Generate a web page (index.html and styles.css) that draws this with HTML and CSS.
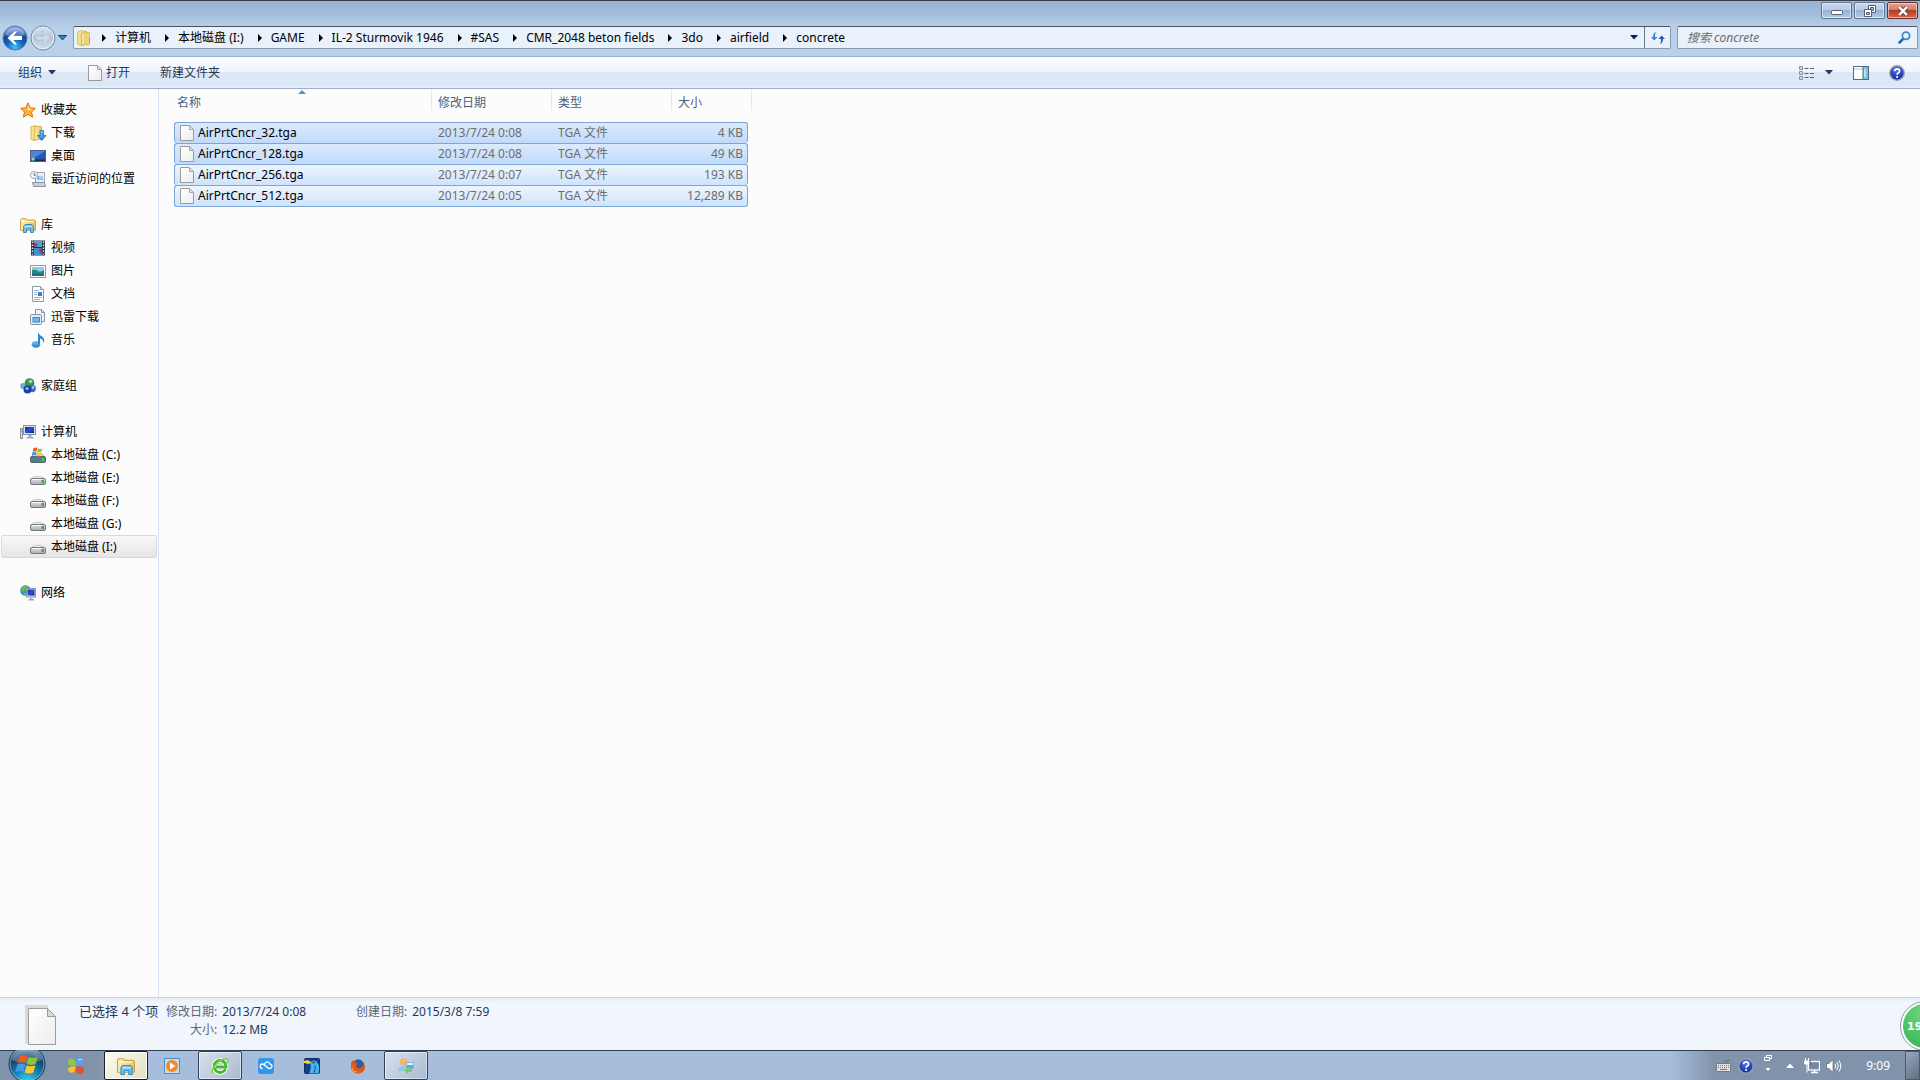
FILE: index.html
```html
<!DOCTYPE html>
<html lang="zh-CN">
<head>
    <meta charset="UTF-8">
    <meta name="viewport" content="width=device-width, initial-scale=1.0">
    <title>concrete</title>
    <link rel="stylesheet" href="styles.css">
</head>
<body>
    <!-- shared icons -->
    <svg class="defs" aria-hidden="true">
        <defs>
            <linearGradient id="paperFill" x1="0" y1="0" x2="1" y2="1">
                <stop offset="0" stop-color="#ffffff"/>
                <stop offset="1" stop-color="#ededed"/>
            </linearGradient>
            <linearGradient id="folderFill" x1="0" y1="0" x2="1" y2="0">
                <stop offset="0" stop-color="#fbf0b4"/>
                <stop offset="1" stop-color="#e6c65e"/>
            </linearGradient>
            <linearGradient id="blueFill" x1="0" y1="0" x2="0" y2="1">
                <stop offset="0" stop-color="#7cc6f2"/>
                <stop offset="1" stop-color="#1f7fd0"/>
            </linearGradient>
            <linearGradient id="driveFill" x1="0" y1="0" x2="0" y2="1">
                <stop offset="0" stop-color="#e3e3e7"/>
                <stop offset="1" stop-color="#a9a9b3"/>
            </linearGradient>
            <linearGradient id="screenFill" x1="0" y1="0" x2="1" y2="1">
                <stop offset="0" stop-color="#0b1fa8"/>
                <stop offset="0.5" stop-color="#2a50e0"/>
                <stop offset="1" stop-color="#0a1890"/>
            </linearGradient>
            <radialGradient id="backFill" cx="0.5" cy="0.9" r="0.8">
                <stop offset="0" stop-color="#3fc8ff"/>
                <stop offset="0.45" stop-color="#0f62c0"/>
                <stop offset="0.75" stop-color="#15469c"/>
                <stop offset="1" stop-color="#7ea6dc"/>
            </radialGradient>
            <linearGradient id="forwardFill" x1="0" y1="0" x2="0" y2="1">
                <stop offset="0" stop-color="#dbe5f1"/>
                <stop offset="0.5" stop-color="#b4c7de"/>
                <stop offset="1" stop-color="#d3e0ee"/>
            </linearGradient>
            <radialGradient id="orbFill" cx="0.5" cy="1" r="0.95">
                <stop offset="0" stop-color="#3fd6f5"/>
                <stop offset="0.4" stop-color="#1583b4"/>
                <stop offset="0.75" stop-color="#17426c"/>
                <stop offset="1" stop-color="#6f93b4"/>
            </radialGradient>
            <radialGradient id="helpFill" cx="0.5" cy="0.3" r="0.7">
                <stop offset="0" stop-color="#4d7df0"/>
                <stop offset="1" stop-color="#0b209a"/>
            </radialGradient>
        </defs>
        <symbol id="icon-file" viewBox="0 0 14 16">
            <path d="M0.500 0.500h9l4 4v11h-13z" fill="url(#paperFill)" stroke="#9a9a9a"/>
            <path d="M9.500 0.500v4h4z" fill="#e4e4e4" stroke="#a8a8a8"/>
        </symbol>
        <symbol id="icon-drive" viewBox="0 0 16 16">
            <path d="M1 9l3-2q4-1.500 8 0l3 2z" fill="#f4f4f6" stroke="#b5b5bb" stroke-width="0.800"/>
            <rect x="0.500" y="8.500" width="15" height="6" rx="1.500" fill="url(#driveFill)" stroke="#77777f"/>
            <path d="M2 9.500h9" stroke="#fafafa"/>
            <rect x="11.500" y="10" width="2.500" height="3" fill="#35b520"/>
        </symbol>
        <symbol id="icon-library" viewBox="0 0 16 16">
            <path d="M0.500 13.500v-11l1-1h4l1 1.500h8l1 1v9.500z" fill="url(#folderFill)" stroke="#c9a548"/>
            <path d="M2 4.500h12" stroke="#fffbe0"/>
            <path d="M3.500 15.500v-6l1.500-2h7l1.500 2v6h-3v-3.500h-4v3.500z" fill="#6fc0ea" stroke="#3c8fc4"/>
            <path d="M4.500 9.500h8" stroke="#c8ecfc"/>
        </symbol>
        <symbol id="icon-flag" viewBox="0 0 20 20">
            <path d="M3.500 3.500q3.500-2 6.500 0L8.500 9q-3-1.500-6.500 0z" fill="#ee5a24"/>
            <path d="M11 4q3.500 1.600 7 0L16.500 9.500q-3.500 1.600-7 0z" fill="#8cc63c"/>
            <path d="M1.800 10q3.200-1.600 6.500 0L6.800 16Q3.500 14.400 0.300 16z" fill="#3f9be8"/>
            <path d="M9.300 10.500q3.500 1.600 7 0L14.700 16.300q-3.500 1.700-7 0z" fill="#fcc62e"/>
        </symbol>
        <symbol id="icon-help" viewBox="0 0 16 16">
            <circle cx="8" cy="8" r="7.200" fill="url(#helpFill)" stroke="#9a9cae" stroke-width="1.500"/>
            <path d="M5.500 6.300Q5.700 3.800 8.100 3.800T10.600 6Q10.600 7.300 9.200 8 8.100 8.600 8.100 9.800" fill="none" stroke="#fff" stroke-width="1.700"/>
            <circle cx="8.100" cy="12" r="1.100" fill="#fff"/>
        </symbol>
    </svg>

    <header class="window-head">
        <div class="titlebar">
            <button class="win-btn" aria-label="最小化">
                <svg width="14" height="14" viewBox="0 0 14 14"><rect x="1.500" y="6.500" width="11" height="4" rx="1" fill="#fff" stroke="#53627a"/></svg>
            </button>
            <button class="win-btn" aria-label="向下还原">
                <svg width="14" height="14" viewBox="0 0 14 14"><path d="M5.500 1.500h7v7h-7z" fill="#fff" stroke="#53627a"/><path d="M7.500 3.500h3v3h-3z" fill="#9fb7d5" stroke="#53627a"/><path d="M1.500 5.500h7v7h-7z" fill="#fff" stroke="#53627a"/><path d="M3.500 8.500h3v2h-3z" fill="#9fb7d5" stroke="#53627a"/></svg>
            </button>
            <button class="win-btn close" aria-label="关闭">
                <svg width="14" height="14" viewBox="0 0 14 14"><path d="M3.500 3.500l7 7M10.500 3.500l-7 7" stroke="#5b3a45" stroke-width="4.500"/><path d="M3.200 3.200l7.600 7.600M10.800 3.200l-7.600 7.600" stroke="#fff" stroke-width="2.500"/></svg>
            </button>
        </div>
        <div class="navbar">
            <div class="history">
                <button class="round" aria-label="后退">
                    <svg width="26" height="26" viewBox="0 0 26 26">
                        <circle cx="13" cy="13" r="12" fill="url(#backFill)" stroke="#5f7596"/>
                        <path d="M3.500 10a10 10 0 0 1 19 0q-9.500 4-19 0z" fill="#fff" opacity="0.300"/>
                        <path d="M5.500 13L12.500 6.500H15L11.500 11H20v4H11.500L15 19.500H12.500z" fill="#fff"/>
                    </svg>
                </button>
                <button class="round" aria-label="前进">
                    <svg width="26" height="26" viewBox="0 0 26 26">
                        <circle cx="13" cy="13" r="12" fill="url(#forwardFill)" stroke="#76889f"/>
                        <circle cx="13" cy="13" r="10.800" fill="none" stroke="#e8eff8"/>
                        <path d="M20.500 13L13.500 6.500H11L14.500 11H6v4H14.500L11 19.500H13.500z" fill="#cfdbea" stroke="#a9bbd2" stroke-width="0.600"/>
                    </svg>
                </button>
                <button class="recent" aria-label="最近的页面">
                    <svg width="9" height="6" viewBox="0 0 9 6"><path d="M0.500 0.500h8l-4 4.500z" fill="#2f86c6" stroke="#17416e"/></svg>
                </button>
            </div>
            <nav class="address" aria-label="地址">
                <svg class="address-icon" width="14" height="16" viewBox="0 0 14 16">
                    <path d="M0.500 2l4-1.500 3 1V15l-3 .5-4-1z" fill="#f4df8c" stroke="#dfc05a"/>
                    <path d="M4.500 3.500l5-2.500v12.500l-5 2z" fill="url(#folderFill)" stroke="#d8b652"/>
                    <path d="M9.500 2.500h3v12l-4 .5" fill="#f0d67a" stroke="#dcbb58"/>
                    <path d="M12.500 8v5" stroke="#69aadb"/>
                </svg>
                <ol class="crumbs">
                    <li><a href="#">计算机</a></li>
                    <li><a href="#">本地磁盘 (I:)</a></li>
                    <li><a href="#">GAME</a></li>
                    <li><a href="#">IL-2 Sturmovik 1946</a></li>
                    <li><a href="#">#SAS</a></li>
                    <li><a href="#">CMR_2048 beton fields</a></li>
                    <li><a href="#">3do</a></li>
                    <li><a href="#">airfield</a></li>
                    <li><a href="#">concrete</a></li>
                </ol>
                <button class="addr-btn" aria-label="以前的位置">
                    <svg width="8" height="5" viewBox="0 0 8 5"><path d="M0 0h8L4 4.500z" fill="#0a1a66"/></svg>
                </button>
                <button class="addr-btn refresh" aria-label="刷新">
                    <svg width="14" height="14" viewBox="0 0 14 14">
                        <path d="M5.500 1Q4 1.500 4 4v2H6.500L3.200 9.500 0 6H2Q2 1.500 5.500 1z" fill="#2e86d4"/>
                        <path d="M8.500 13Q10 12.500 10 10V8H7.500l3.200-3.500L14 8H12Q12 12.500 8.500 13z" fill="#2459b4"/>
                    </svg>
                </button>
            </nav>
            <form class="search">
                <input type="search" aria-label="搜索" placeholder="搜索 concrete">
                <button type="submit" aria-label="搜索">
                    <svg width="13" height="13" viewBox="0 0 13 13"><path d="M1.500 11.500L6 7" stroke="#2866a8" stroke-width="2.500" stroke-linecap="round"/><circle cx="8" cy="4.800" r="3.600" fill="#eef7fd" stroke="#3a8ccc" stroke-width="1.800"/></svg>
                </button>
            </form>
        </div>
    </header>

    <div class="toolbar">
        <button class="organize">组织
            <svg width="8" height="5" viewBox="0 0 8 5"><path d="M0 0h8L4 4.500z" fill="#1e395b"/></svg>
        </button>
        <button class="open"><svg width="14" height="16"><use href="#icon-file"/></svg>打开</button>
        <button>新建文件夹</button>
        <div class="toolbar-right">
            <button class="view" aria-label="更改您的视图">
                <svg width="16" height="14" viewBox="0 0 16 14">
                    <path d="M0.500 0.500h3v3h-3zM0.500 5.500h3v3h-3zM0.500 10.500h3v3h-3z" fill="#fff" stroke="#8194ad"/>
                    <path d="M1.500 2h1M1.500 12h1" stroke="#3d8a5e"/>
                    <path d="M1.500 7h1" stroke="#c33"/>
                    <path d="M5.500 2.500h4M11 2.500h4M5.500 7.500h4M11 7.500h4M5.500 11.500h4M11 11.500h4" stroke="#51647e"/>
                </svg>
                <svg width="8" height="5" viewBox="0 0 8 5"><path d="M0 0h8L4 4.500z" fill="#1e395b"/></svg>
            </button>
            <button aria-label="显示预览窗格">
                <svg width="16" height="14" viewBox="0 0 16 14"><rect x="0.500" y="0.500" width="15" height="13" fill="#fff" stroke="#54687f"/><path d="M1 3h9" stroke="#b3c4d8"/><path d="M10 1h5v12h-5z" fill="#74c3dc"/><path d="M10 1v12" stroke="#54687f"/><path d="M12 3v8" stroke="#b6e6f2" stroke-width="2"/></svg>
            </button>
            <button aria-label="获取帮助">
                <svg width="16" height="16"><use href="#icon-help"/></svg>
            </button>
        </div>
    </div>

    <div class="content">
        <nav class="sidebar" aria-label="导航窗格">
            <section>
                <a class="root" href="#">
                    <svg width="16" height="16" viewBox="0 0 16 16"><path d="M8 .8l2.200 5 5.300.5-4 3.600 1.200 5.300L8 12.400l-4.700 2.800 1.200-5.300-4-3.600 5.300-.5z" fill="#fbb03a" stroke="#e0741c"/><path d="M8 3l1.500 3.800 3 .3L8 8.500z" fill="#fff0a8"/></svg>
                    收藏夹</a>
                <a href="#">
                    <svg width="16" height="16" viewBox="0 0 16 16"><path d="M1 1.500l5-1 1 1v13l-3 1-3-1z" fill="#f6e494" stroke="#d9b950"/><path d="M5 1.500h6.500v13H4z" fill="url(#folderFill)" stroke="#d9b950"/><path d="M10 5.500h3.500v5H16l-4.300 5-4.200-5H10z" fill="url(#blueFill)" stroke="#1c68b0" stroke-width="0.800"/></svg>
                    下载</a>
                <a href="#">
                    <svg width="16" height="16" viewBox="0 0 16 16"><rect x="0.500" y="2.500" width="15" height="11" fill="#2457b8" stroke="#4b5f88"/><path d="M1 3h14L6 9 1 10z" fill="#4b86dc"/><path d="M1 11.500h14v1.500H1z" fill="#1c2c58"/><circle cx="3" cy="11" r="2" fill="#40b4c8"/><circle cx="3" cy="11" r="0.900" fill="#f4d24a"/></svg>
                    桌面</a>
                <a href="#">
                    <svg width="16" height="16" viewBox="0 0 16 16"><path d="M5.500 1.500h9v10h-9z" fill="#e9eef4" stroke="#9aa4b0"/><path d="M2.500 11.500h12l1 4h-12z" fill="#c9cfd8" stroke="#8d96a2"/><path d="M7.500 5h5v4h-5z" fill="#5fa9e2"/><path d="M9 6h3M9 8h2" stroke="#fff"/><circle cx="4" cy="4" r="3.500" fill="#f7f9fb" stroke="#9aa4b0"/><path d="M4 2v2.200h2" fill="none" stroke="#5d6b7d"/></svg>
                    最近访问的位置</a>
            </section>
            <section>
                <a class="root" href="#"><svg width="16" height="16"><use href="#icon-library"/></svg>库</a>
                <a href="#">
                    <svg width="16" height="16" viewBox="0 0 16 16"><rect x="1" y="0.500" width="14" height="15" fill="#28323c"/><path d="M4 1h8v6H4z" fill="#4aa3dc"/><path d="M4 8h8v7H4z" fill="#3c8fd0"/><path d="M4 3l4 1-2 3H4zM9 9l3-1v4l-2 2z" fill="#9c3e56"/><path d="M2.500 1.500v13M13.500 1.500v13" stroke="#e4eaee" stroke-width="1.500" stroke-dasharray="1.500 1.500"/></svg>
                    视频</a>
                <a href="#">
                    <svg width="16" height="16" viewBox="0 0 16 16"><rect x="0.500" y="2.500" width="15" height="12" fill="#fff" stroke="#8d99a6"/><path d="M2 4h12v9H2z" fill="#8ccdf0"/><path d="M2 7q4-1 6 1t6-1v6H2z" fill="#2f8a6c"/><path d="M2 10q6 1 12 .5V13H2z" fill="#2468a8"/></svg>
                    图片</a>
                <a href="#">
                    <svg width="16" height="16" viewBox="0 0 16 16"><path d="M2.500 0.500h8l3 3v12h-11z" fill="#fff" stroke="#8d99a6"/><path d="M10.500 0.500v3h3" fill="#dfe5ec" stroke="#8d99a6"/><path d="M4 4.500h5M4 6.500h3M4 8.500h3M4 11.500h8M4 13.500h6" stroke="#93b4d8"/><path d="M8 6h4v4H8z" fill="#3a7fd0"/></svg>
                    文档</a>
                <a href="#">
                    <svg width="16" height="16" viewBox="0 0 16 16"><path d="M5.500 0.500h6l3 3v9h-9z" fill="#f0f5fa" stroke="#8297ad"/><path d="M11.500 0.500v3h3" fill="none" stroke="#8297ad"/><rect x="0.500" y="5.500" width="11" height="10" rx="1" fill="#e2edf7" stroke="#7b94b0"/><rect x="3" y="8.500" width="6.500" height="4.500" fill="#73b8ec" stroke="#3f86c4"/></svg>
                    迅雷下载</a>
                <a href="#">
                    <svg width="16" height="16" viewBox="0 0 16 16"><ellipse cx="6" cy="12.300" rx="4.300" ry="3.400" fill="url(#blueFill)"/><path d="M8 0q1 3 4 4.500 3.800 2.500 1.300 7 .5-4.500-3.300-5v6H8z" fill="#2386d6"/></svg>
                    音乐</a>
            </section>
            <section>
                <a class="root" href="#">
                    <svg width="16" height="16" viewBox="0 0 16 16"><circle cx="3.200" cy="8" r="3" fill="#6aa8dc"/><circle cx="9.500" cy="5" r="4.800" fill="#35974a"/><circle cx="12.200" cy="10.500" r="3.700" fill="#3f66bc"/><circle cx="7.500" cy="11.500" r="4" fill="#1e3f9c"/><circle cx="10.500" cy="3.500" r="1.800" fill="#a5dd98"/><circle cx="7" cy="10.500" r="1.600" fill="#8fb8f0"/><circle cx="13" cy="9.500" r="1.400" fill="#9fc4ee"/></svg>
                    家庭组</a>
            </section>
            <section>
                <a class="root" href="#">
                    <svg width="16" height="16" viewBox="0 0 16 16"><rect x="0.500" y="4.500" width="2" height="10" fill="#d7dbe0" stroke="#8c949e"/><path d="M1 7h1" stroke="#3ca83c"/><rect x="3.500" y="1.500" width="12" height="9" fill="#dde1e6" stroke="#8c949e"/><path d="M5 3h9v6H5z" fill="url(#screenFill)"/><path d="M8.500 11h3v2h2v1.500h-7V13h2z" fill="#a4abb5"/></svg>
                    计算机</a>
                <a href="#">
                    <svg width="16" height="16" viewBox="0 0 16 16"><path d="M1 10l3-3h8l3 3z" fill="#dfe3e8" stroke="#a0a6ad"/><rect x="0.500" y="9.500" width="15" height="6" rx="1" fill="#4b7f92" stroke="#5c6670"/><rect x="12" y="11" width="2" height="3" fill="#4bd02c"/><use href="#icon-flag" x="1" y="-1" width="13" height="12"/></svg>
                    本地磁盘 (C:)</a>
                <a href="#"><svg width="16" height="16"><use href="#icon-drive"/></svg>本地磁盘 (E:)</a>
                <a href="#"><svg width="16" height="16"><use href="#icon-drive"/></svg>本地磁盘 (F:)</a>
                <a href="#"><svg width="16" height="16"><use href="#icon-drive"/></svg>本地磁盘 (G:)</a>
                <a class="current" href="#"><svg width="16" height="16"><use href="#icon-drive"/></svg>本地磁盘 (I:)</a>
            </section>
            <section>
                <a class="root" href="#">
                    <svg width="16" height="16" viewBox="0 0 16 16"><circle cx="5.500" cy="5.500" r="5.300" fill="#2c8fd6"/><path d="M1.500 3q3-3.500 6.500-2L6 4.500 3.500 7 1 6zM3 8l3 0v3l-2-1z" fill="#5cc04a"/><rect x="6.500" y="3.500" width="9" height="8.500" fill="#dde1e6" stroke="#8c949e"/><path d="M7.500 4.500h7v6h-7z" fill="url(#screenFill)"/><path d="M10 12.500h2.500V14H14v1.500H8.500V14H10z" fill="#a4abb5"/></svg>
                    网络</a>
            </section>
        </nav>

        <main class="files">
            <table>
                <colgroup>
                    <col class="col-name">
                    <col class="col-date">
                    <col class="col-type">
                    <col class="col-size">
                    <col class="col-edge">
                </colgroup>
                <thead>
                    <tr>
                        <th class="sorted" aria-sort="ascending">名称</th>
                        <th>修改日期</th>
                        <th>类型</th>
                        <th colspan="2">大小</th>
                    </tr>
                </thead>
                <tbody>
                    <tr class="deep">
                        <td><svg width="14" height="16"><use href="#icon-file"/></svg>AirPrtCncr_32.tga</td>
                        <td>2013/7/24 0:08</td>
                        <td>TGA 文件</td>
                        <td class="size">4 KB</td>
                        <td class="edge"></td>
                    </tr>
                    <tr class="deep">
                        <td><svg width="14" height="16"><use href="#icon-file"/></svg>AirPrtCncr_128.tga</td>
                        <td>2013/7/24 0:08</td>
                        <td>TGA 文件</td>
                        <td class="size">49 KB</td>
                        <td class="edge"></td>
                    </tr>
                    <tr>
                        <td><svg width="14" height="16"><use href="#icon-file"/></svg>AirPrtCncr_256.tga</td>
                        <td>2013/7/24 0:07</td>
                        <td>TGA 文件</td>
                        <td class="size">193 KB</td>
                        <td class="edge"></td>
                    </tr>
                    <tr>
                        <td><svg width="14" height="16"><use href="#icon-file"/></svg>AirPrtCncr_512.tga</td>
                        <td>2013/7/24 0:05</td>
                        <td>TGA 文件</td>
                        <td class="size">12,289 KB</td>
                        <td class="edge"></td>
                    </tr>
                </tbody>
            </table>
        </main>
    </div>

    <footer class="details">
        <svg class="details-icon" width="32" height="41" viewBox="0 0 32 41">
            <path d="M0 0h23v4H4v35H0z" fill="#d9d9d9"/>
            <path d="M3.500 3.500h19l8 8v28h-27z" fill="url(#paperFill)" stroke="#9c9c9c"/>
            <path d="M22.500 3.500v8h8z" fill="#d8d8d8" stroke="#9c9c9c"/>
        </svg>
        <p class="details-title">已选择 4 个项</p>
        <dl>
            <dt>修改日期:</dt>
            <dd>2013/7/24 0:08</dd>
            <dt>创建日期:</dt>
            <dd>2015/3/8 7:59</dd>
            <dt>大小:</dt>
            <dd>12.2 MB</dd>
        </dl>
        <button class="float-ball" aria-label="加速球">19</button>
    </footer>

    <div class="taskbar">
        <button class="start" aria-label="开始">
            <svg width="38" height="38" viewBox="0 0 38 38">
                <circle cx="19" cy="19" r="18" fill="url(#orbFill)" stroke="#24405e"/>
                <circle cx="19" cy="19" r="16.800" fill="none" stroke="#bfe0f2" opacity="0.500"/>
                <path d="M4 15a15.500 15.500 0 0 1 30 0q-15 6-30 0z" fill="#fff" opacity="0.250"/>
                <use href="#icon-flag" x="6" y="7" width="27" height="25"/>
            </svg>
        </button>
        <div class="tasks">
            <button class="task pinned" aria-label="360">
                <svg width="18" height="18" viewBox="0 0 18 18"><path d="M1 5Q1 1 5 2q4 0 3.500 6-6 1.500-7-1z" fill="#94c93a"/><circle cx="12.800" cy="5" r="4.200" fill="#5b9fe6"/><path d="M1 12q2-3.500 7.500-2.500 0 6-3 6Q1 16.500 1 12z" fill="#f2c32c"/><circle cx="12.800" cy="13" r="4.200" fill="#e0503c"/><path d="M11 3q2-1.500 4 0" stroke="#d3e8fc" fill="none"/></svg>
            </button>
            <button class="task active" aria-label="Windows 资源管理器">
                <svg width="18" height="18"><use href="#icon-library"/></svg>
            </button>
            <button class="task" aria-label="Windows Media Player">
                <svg width="16" height="16" viewBox="0 0 16 16"><rect x="0.500" y="0.500" width="15" height="15" fill="#c2def2" stroke="#4b8fc4"/><circle cx="8" cy="8" r="6" fill="#f58a1e"/><path d="M6 4.500l5.500 3.500L6 11.500z" fill="#fff"/></svg>
            </button>
            <button class="task open" aria-label="浏览器">
                <svg width="18" height="18" viewBox="0 0 18 18"><path d="M14.500 12a6 6 0 1 1 .3-4.200q.4 1.500.2 2.200H5" fill="none" stroke="#fff" stroke-width="4.500"/><path d="M14.500 12a6 6 0 1 1 .3-4.200q.4 1.500.2 2.200H5" fill="none" stroke="#43b82a" stroke-width="2.800"/><path d="M1.500 16Q0 12 6 6.500t10.500-4.500Q18 4 15 7" fill="none" stroke="#7fd44e" stroke-width="1.500"/></svg>
            </button>
            <button class="task" aria-label="云盘">
                <svg width="16" height="16" viewBox="0 0 16 16"><rect width="16" height="16" rx="3" fill="#2f98ee"/><path d="M4.500 10.500a2.200 2.200 0 0 1 0-4.500Q6 6 8 8.200t3.500 2.300a2.200 2.200 0 0 0 .5-4.400Q11 3.500 8.500 4 7 4.500 6.500 6" fill="none" stroke="#fff" stroke-width="1.300"/></svg>
            </button>
            <button class="task" aria-label="迅雷">
                <svg width="16" height="16" viewBox="0 0 16 16"><rect x="0.500" y="0.500" width="15" height="15" rx="1" fill="#12408c" stroke="#0e2c64"/><path d="M5 15.500Q8 10 6 5q3-4.500 7-1 3.500 4 1.500 11.500z" fill="#4cb0ee"/><path d="M0 3q4-2 7 1L5 6 0 5z" fill="#f6d52c"/><circle cx="9.500" cy="4.500" r="1" fill="#0e2c64"/><path d="M10 14.500q2-4 1-7" stroke="#17498f" fill="none"/></svg>
            </button>
            <button class="task" aria-label="Firefox">
                <svg width="16" height="16" viewBox="0 0 16 16"><circle cx="8" cy="8.500" r="7" fill="#e8671c"/><circle cx="8.500" cy="6.500" r="5" fill="#2b5d9c"/><path d="M1 5l2-3 1 2q3 0 4 2-2 0-2 2 1 3 4 2 4-1 3-5 3 3 1.500 6.500Q12 15.500 8 15.500 1 15 1 8z" fill="#e2571a"/><path d="M2 7q0 6 6 7-4 1-6-3z" fill="#f9b53a"/></svg>
            </button>
            <button class="task open" aria-label="图片工具">
                <svg width="18" height="18" viewBox="0 0 18 18"><circle cx="6.500" cy="5" r="3.800" fill="#f2b76c"/><path d="M1 14q0-5 5.500-5t5.500 5z" fill="#8cc8f0"/><path d="M9.500 5.500h7v6h-7z" fill="#eaf4fb" stroke="#7fb3da"/><path d="M10 8h6v3h-6z" fill="#4cb8c4"/><path d="M7 13.500l4-3v1.500h4v3h-4V17z" fill="#7ed03c"/></svg>
            </button>
        </div>
        <div class="tray">
            <button aria-label="输入法">
                <svg width="16" height="14" viewBox="0 0 16 14"><path d="M8 4Q8 2 11 2t2-2" fill="none" stroke="#6d6d6d"/><rect x="0.500" y="4.500" width="14" height="8" rx="1" fill="#e2e2e4" stroke="#77797d"/><path d="M2 6.500h11M2 8.500h11" stroke="#77797d" stroke-dasharray="1 1"/><path d="M4 10.500h7" stroke="#77797d"/></svg>
            </button>
            <button aria-label="帮助">
                <svg width="16" height="16"><use href="#icon-help"/></svg>
            </button>
            <button class="lang" aria-label="语言栏">
                <svg width="8" height="18" viewBox="0 0 8 18"><path d="M2.500 1.500h5v3h-5z" fill="none" stroke="#fff"/><path d="M0.500 3.500h5v3h-5z" fill="#8495ad" stroke="#fff"/><path d="M1.500 14h5l-2.500 3z" fill="#fff"/></svg>
            </button>
            <button class="more" aria-label="显示隐藏的图标">
                <svg width="8" height="5" viewBox="0 0 8 5"><path d="M0 5h8L4 .5z" fill="#fff"/></svg>
            </button>
            <button aria-label="网络">
                <svg width="16" height="16" viewBox="0 0 16 16"><rect x="4.500" y="3.500" width="11" height="8.500" fill="#7688a2" stroke="#fff" stroke-width="1.300"/><path d="M7 14.500h7M10.500 12v2.500" stroke="#fff" stroke-width="1.500"/><path d="M1.500 0v3M4.500 0v3" stroke="#fff"/><path d="M0.500 3h5v3h-5zM3 6v8.500" fill="#fff" stroke="#fff"/><path d="M6 7V2" stroke="#333f52" stroke-width="0.800"/></svg>
            </button>
            <button aria-label="音量">
                <svg width="16" height="16" viewBox="0 0 16 16"><path d="M0.500 5.500H3L7 1.500v13l-4-4H.5z" fill="#fff" stroke="#4b586c" stroke-width="0.600"/><path d="M9 5.500q1.500 2.500 0 5M11 4q2.500 4 0 8M13 2.500q3.500 5.500 0 11" fill="none" stroke="#fff"/></svg>
            </button>
            <time class="clock">9:09</time>
            <button class="show-desktop" aria-label="显示桌面"></button>
        </div>
    </div>
</body>
</html>
```
FILE: styles.css
```css
    * {
        box-sizing: border-box;
    }

    body {
        display: flex;
        flex-direction: column;
        height: 100vh;
        margin: 0;
        overflow: hidden;
        font: 12px/18px "Noto Sans", "Noto Sans CJK SC", sans-serif;
        color: #000;
        background-color: #fcfcfc;
    }

    button {
        display: flex;
        align-items: center;
        justify-content: center;
        margin: 0;
        padding: 0;
        border: none;
        background: none;
        font: inherit;
        color: inherit;
    }

    a {
        color: inherit;
        text-decoration: none;
    }

    svg {
        flex: none;
        display: block;
    }

    .defs {
        position: absolute;
        width: 0;
        height: 0;
    }

    /* title bar and address bar */
    .window-head {
        border-top: 1px solid #3a3f48;
        background: linear-gradient(#98b2d3, #a5bedc 14px, #bad0ea 26px, #b9d1ea);
    }

    .titlebar {
        display: flex;
        justify-content: flex-end;
        gap: 2px;
        height: 24px;
        padding: 1px 2px 0 0;
    }

    .win-btn {
        width: 31px;
        height: 17px;
        border: 1px solid #5f7593;
        border-radius: 2px;
        background: linear-gradient(#c8d8ec, #b6cae4 50%, #98b2d2 50%, #b4cae4);
        box-shadow: inset 0 0 0 1px rgba(255, 255, 255, 0.5);
    }

    .win-btn.close {
        border-color: #6b2b30;
        background: linear-gradient(#e0a494, #d07a66 50%, #bb3a22 50%, #d4684c);
    }

    .navbar {
        display: flex;
        align-items: center;
        gap: 6px;
        height: 25px;
        margin-bottom: 6px;
        padding: 0 2px;
    }

    .history {
        display: flex;
        align-items: center;
        gap: 2px;
    }

    .recent {
        width: 9px;
    }

    .address, .search {
        display: flex;
        align-items: center;
        height: 23px;
        border: 1px solid #8c99aa;
        border-top-color: #4b535e;
        border-radius: 2px;
        background-color: #e9f1fa;
    }

    .address {
        flex: 1;
        padding-left: 3px;
    }

    .crumbs {
        display: flex;
        flex: 1;
        gap: 3px;
        margin: 0;
        padding: 0;
        list-style: none;
    }

    .crumbs li {
        display: flex;
        align-items: center;
    }

    .crumbs li::before {
        content: "";
        margin: 0 9px 0 11px;
        border: 4px solid transparent;
        border-left-color: #000;
        border-right-width: 0;
    }

    .addr-btn {
        width: 20px;
        height: 21px;
    }

    .addr-btn.refresh {
        width: 26px;
        border-left: 1px solid #6c7887;
    }

    .search {
        width: 241px;
        padding: 0 6px 0 9px;
    }

    .search input {
        flex: 1;
        min-width: 0;
        height: 21px;
        padding: 0;
        border: none;
        outline: none;
        background: none;
        font: inherit;
        font-style: italic;
    }

    .search input::placeholder {
        color: #6d6d6d;
    }

    /* command bar */
    .toolbar {
        display: flex;
        align-items: center;
        gap: 30px;
        height: 33px;
        padding: 0 15px 0 18px;
        border-top: 1px solid #9db4d0;
        border-bottom: 1px solid #a0afc3;
        background: linear-gradient(#fafcff, #eff5fc 15px, #dce6f4 15px, #dde8f6 28px, #e6eff9);
        color: #1e395b;
    }

    .organize, .open {
        gap: 6px;
    }

    .open {
        margin-left: 2px;
        gap: 4px;
    }

    .toolbar-right {
        display: flex;
        align-items: center;
        gap: 20px;
        margin-left: auto;
    }

    .view {
        gap: 10px;
    }

    /* folder tree */
    .content {
        display: flex;
        flex: 1;
        min-height: 0;
    }

    .sidebar {
        display: flex;
        flex-direction: column;
        gap: 23px;
        width: 159px;
        padding: 9px 1px 0;
        border-right: 1px solid #d6e1f2;
    }

    .sidebar a {
        display: flex;
        align-items: center;
        gap: 5px;
        height: 23px;
        padding-left: 28px;
        border: 1px solid transparent;
        border-radius: 2px;
    }

    .sidebar a.root {
        padding-left: 18px;
    }

    .sidebar a.current {
        border-color: #d9d9d9;
        background: linear-gradient(#f8f8f8, #e6e6e6);
    }

    /* file list */
    .files {
        flex: 1;
        padding-left: 15px;
    }

    table {
        border-collapse: separate;
        border-spacing: 0;
        table-layout: fixed;
        width: 578px;
    }

    .col-name {
        width: 258px;
    }

    .col-date, .col-type {
        width: 120px;
    }

    .col-size {
        width: 76px;
    }

    .col-edge {
        width: 4px;
    }

    th {
        height: 33px;
        padding: 5px 6px 0;
        background: linear-gradient(#e8f0fa, #d5e2f1, #f4f8fc) right top / 1px 24px no-repeat;
        color: #4c607a;
        font-weight: normal;
        text-align: left;
        vertical-align: top;
    }

    /* sort arrow above the column title */
    .sorted {
        position: relative;
        padding-left: 3px;
    }

    .sorted::after {
        content: "";
        position: absolute;
        top: 1px;
        left: 50%;
        margin-left: -5px;
        border: 4px solid transparent;
        border-top-width: 0;
        border-bottom-color: #5c93b5;
    }

    td {
        height: 21px;
        padding: 0 6px;
        border-top: 1px solid #7da5d8;
        background: linear-gradient(#edf5fe, #cfe3fc);
        color: #6d6d6d;
        line-height: 20px;
        white-space: nowrap;
    }

    .deep td {
        background: linear-gradient(#dceafc, #c0dafb);
    }

    tbody tr:last-child td {
        border-bottom: 1px solid #7da5d8;
    }

    td:first-child {
        display: flex;
        align-items: center;
        gap: 4px;
        padding-left: 5px;
        border-left: 1px solid #7da5d8;
        border-radius: 3px 0 0 3px;
        color: #000;
    }

    tbody tr:last-child td:first-child {
        height: 22px;
    }

    td.size {
        padding-right: 4px;
        border-right: 1px solid #7da5d8;
        border-radius: 0 3px 3px 0;
        text-align: right;
    }

    tbody tr td.edge {
        padding: 0;
        border: none;
        background: none;
    }

    /* details pane */
    .details {
        position: relative;
        display: flex;
        height: 53px;
        padding: 5px 25px;
        border-top: 1px solid #c9d8e9;
        background: linear-gradient(#e4ecf6, #f1f5fc 4px);
        color: #1e395b;
    }

    .details-icon {
        margin-top: 2px;
    }

    .details-title {
        margin: 0 7px 0 22px;
        font-size: 13px;
        line-height: 16px;
    }

    dl {
        display: grid;
        grid-template-columns: 52px 128px 52px auto;
        align-content: start;
        column-gap: 5px;
        margin: 0;
    }

    dt {
        color: #5a6779;
        text-align: right;
    }

    dd {
        margin: 0;
    }

    .float-ball {
        position: absolute;
        top: 4px;
        right: -29px;
        z-index: 1;
        justify-content: flex-start;
        width: 48px;
        height: 48px;
        padding-left: 4px;
        border: 2px solid #fff;
        border-radius: 50%;
        outline: 1px solid #8f9aa5;
        background: radial-gradient(circle at 50% 20%, #6fd57f, #33b552);
        color: #fff;
        font: bold 11px "DejaVu Sans", sans-serif;
    }

    /* taskbar */
    .taskbar {
        display: flex;
        height: 30px;
        padding-left: 8px;
        border-top: 1px solid #333f50;
        background: linear-gradient(90deg, #8193ab 96px, #a6bedb 150px, #a6bedb calc(100% - 250px), #8193ab calc(100% - 205px));
    }

    .start {
        width: 38px;
        height: 38px;
        margin-top: -6px;
    }

    .tasks {
        display: flex;
        gap: 2px;
        flex: 1;
        padding-left: 8px;
    }

    .task {
        width: 44px;
        height: 29px;
        border: 1px solid transparent;
        border-radius: 2px;
    }

    .task.pinned {
        margin-right: 4px;
    }

    .task.open {
        border-color: #33425a;
        background: linear-gradient(135deg, #d8e1ee, #a8bad2);
        box-shadow: inset 0 0 0 1px rgba(255, 255, 255, 0.5);
    }

    .task.active {
        border-color: #1c1f22;
        background: linear-gradient(135deg, #fdfdf2, #e3dfc2);
        box-shadow: inset 0 0 0 1px #fff;
    }

    .tray {
        display: flex;
        align-items: center;
        gap: 6px;
    }

    .tray .lang, .tray .more {
        width: 16px;
    }

    .tray .lang {
        margin-bottom: 6px;
    }

    .clock {
        margin: 0 9px 0 18px;
        color: #fff;
    }

    .show-desktop {
        width: 15px;
        height: 29px;
        border: 1px solid #4d5a6c;
        background: linear-gradient(135deg, #9aa8ba, #5f6e83);
    }
```
